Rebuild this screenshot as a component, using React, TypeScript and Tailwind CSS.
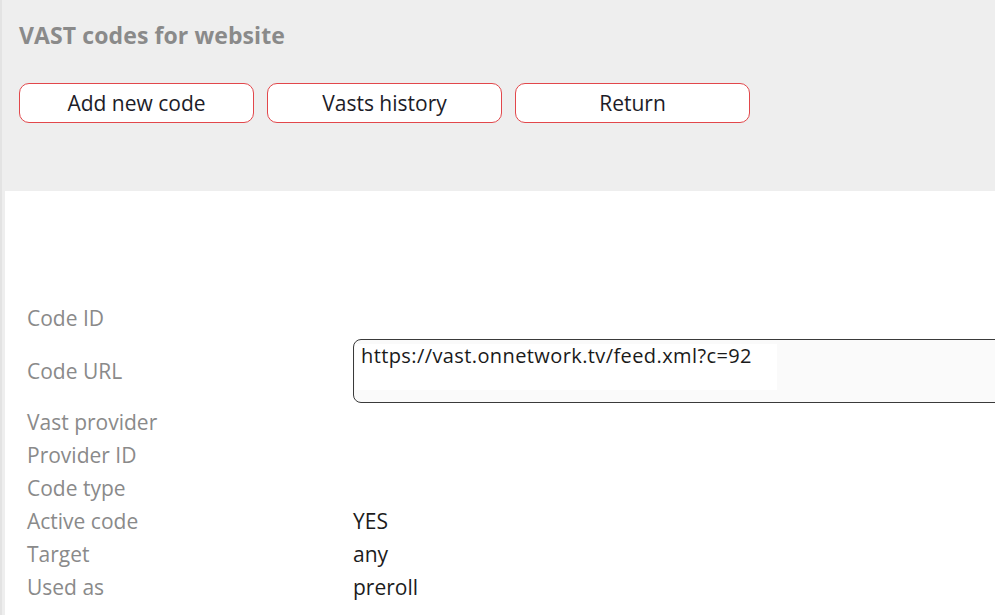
import React from "react";

const rows: { label: string; value?: string }[] = [
  { label: "Vast provider" },
  { label: "Provider ID" },
  { label: "Code type" },
  { label: "Active code", value: "YES" },
  { label: "Target", value: "any" },
  { label: "Used as", value: "preroll" },
];

export default function App() {
  return (
    <div
      className="flex h-[615px] w-[995px] flex-col overflow-hidden border-l-2 border-[#e3e3e3] bg-[#eeeeee]"
      style={{ fontFamily: '"Open Sans", "Noto Sans", sans-serif' }}
    >
      <div className="h-[191px] shrink-0 pl-[17px] pt-[21px]">
        <h1 className="text-[23px] font-bold leading-[28px] tracking-[0.1px] text-[#8a8a8a]">VAST codes for website</h1>
        <div className="mt-[34px] flex gap-[13px]">
          {["Add new code", "Vasts history", "Return"].map((t) => (
            <button
              key={t}
              className="flex h-[40px] w-[235px] items-center justify-center rounded-[10px] border border-[#e2474b] bg-white text-[21px] leading-none text-[#1c1c28]"
            >
              {t}
            </button>
          ))}
        </div>
      </div>
      <div className="ml-[3px] flex-1 overflow-hidden bg-white pl-[22px] pt-[111px]">
        <div className="flex h-[33px] items-center">
          <div className="w-[326px] text-[21px] leading-[33px] text-[#8a8a8a]">Code ID</div>
        </div>
        <div className="flex items-center pt-[4px] pb-[3px]">
          <div className="w-[326px] shrink-0 text-[21px] leading-[33px] text-[#8a8a8a]">Code URL</div>
          <div className="h-[64px] w-[700px] shrink-0 rounded-[8px] border border-[#3a3a3a] bg-[#fafafa] pt-[4px] pl-[1px]">
            <div className="h-[46px] w-[422px] bg-white pl-[6px] text-[20px] leading-[24px] tracking-[0.4px] text-[#1a1a1a]">
              https://vast.onnetwork.tv/feed.xml?c=92
            </div>
          </div>
        </div>
        {rows.map((r) => (
          <div key={r.label} className="flex h-[33px] items-center">
            <div className="w-[326px] shrink-0 text-[21px] leading-[33px] text-[#8a8a8a]">{r.label}</div>
            {r.value && <div className="text-[21px] leading-[33px] text-[#1c1c1c]">{r.value}</div>}
          </div>
        ))}
      </div>
    </div>
  );
}
